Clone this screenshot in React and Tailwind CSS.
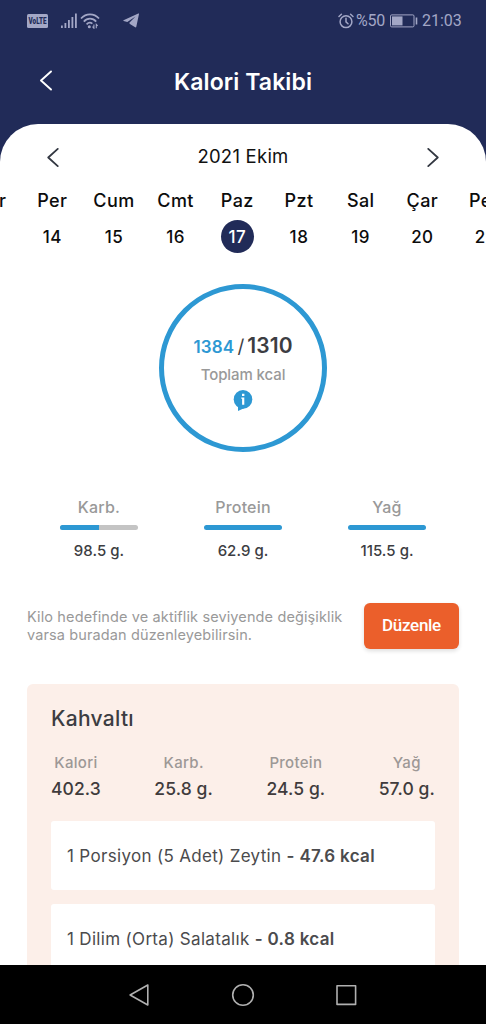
const days = [
  ['Çar', '13'], ['Per', '14'], ['Cum', '15'], ['Cmt', '16'], ['Paz', '17'],
  ['Pzt', '18'], ['Sal', '19'], ['Çar', '20'], ['Per', '21'],
];

const macros = [
  { name: 'Karb.', value: '98.5 g.', percent: 50 },
  { name: 'Protein', value: '62.9 g.', percent: 100 },
  { name: 'Yağ', value: '115.5 g.', percent: 100 },
];

const mealTotals = [
  ['Kalori', '402.3'], ['Karb.', '25.8 g.'], ['Protein', '24.5 g.'], ['Yağ', '57.0 g.'],
];

const foods = [
  ['1 Porsiyon (5 Adet) Zeytin', '47.6 kcal'],
  ['1 Dilim (Orta) Salatalık', '0.8 kcal'],
];

function Chevron({ right, className }) {
  return (
    <svg viewBox="0 0 12 20" className={className} fill="none" stroke="currentColor" strokeWidth="1.9" strokeLinecap="round" strokeLinejoin="round">
      <path d={right ? 'M1 1l10 9-10 9' : 'M11 1L1 10l10 9'} />
    </svg>
  );
}

function StatusBar() {
  return (
    <div className="flex h-[41px] shrink-0 items-center pl-[27px] pr-[24px] font-[Roboto,sans-serif] text-[#a3a7c6]">
      <svg className="h-[14px] w-[21px]" viewBox="0 0 21 14">
        <rect width="21" height="14" rx="1.5" fill="currentColor" />
        <text x="1.5" y="10.2" textLength="18" lengthAdjust="spacingAndGlyphs" fill="#212b58" className="text-[8.8px] font-black">VoLTE</text>
      </svg>
      <svg className="ml-[12px] h-[16px] w-[18px]" viewBox="0 0 18 16" fill="currentColor">
        <rect x="1" y="12.5" width="1.8" height="2.5" />
        <rect x="4.5" y="10" width="1.8" height="5" />
        <rect x="8" y="7" width="1.8" height="8" />
        <rect x="11.5" y="4" width="1.8" height="11" />
        <rect x="15" y="0.5" width="1.8" height="14.5" />
      </svg>
      <svg className="ml-[2px] h-[16px] w-[20px]" viewBox="0 0 20 16" fill="none" stroke="currentColor" strokeWidth="1.7">
        <path d="M1 5.5C6 0 14 0 19 5.5" />
        <path d="M3.8 8.6C7.2 4.7 12.8 4.7 16.2 8.6" />
        <path d="M6.6 11.3C8.6 9.2 10.4 9.2 12.4 10.6" />
        <circle cx="9.3" cy="13.8" r="1.5" fill="currentColor" stroke="none" />
        <path d="M13.9 11.4v3.8l-1.4-1.5M16.3 15.2v-3.8l1.4 1.5" strokeWidth="1.1" />
      </svg>
      <svg className="ml-[23px] h-[15px] w-[16px]" viewBox="0 0 16 15" fill="currentColor">
        <path d="M15.3 0.5L0.5 7.2c-.4.2-.3.7.1.8l3.7 1.1 8.2-5.6-6.4 6.5 1.2 1.3 4.9 3c.5.3 1 .1 1.1-.5L16 1c.1-.5-.3-.7-.7-.5z" />
      </svg>
      <svg className="ml-auto h-[16px] w-[16px]" viewBox="0 0 16 16" fill="none" stroke="currentColor" strokeWidth="1.5" strokeLinecap="round">
        <circle cx="8" cy="8.7" r="5.9" />
        <path d="M8 5.3v3.6l2 1.9M1 3.5l2.4-2.2M15 3.5l-2.4-2.2" />
      </svg>
      <span className="ml-[2px] mt-px w-[30px] whitespace-nowrap text-[16px] leading-none tracking-[-0.2px]">%50</span>
      <svg className="ml-[4px] h-[14px] w-[28px]" viewBox="0 0 28 14" fill="none" stroke="currentColor">
        <rect x="0.5" y="0.9" width="23.5" height="12" rx="1.2" />
        <rect x="2" y="2.4" width="10.5" height="9" fill="currentColor" stroke="none" />
        <path d="M26.5 3.5v7" strokeWidth="1.6" />
      </svg>
      <span className="ml-[4px] mt-px w-[40px] whitespace-nowrap text-[16px] leading-none">21:03</span>
    </div>
  );
}

function Calendar() {
  return (
    <section className="shrink-0 overflow-hidden">
      <div className="flex h-[60px] items-center justify-between px-[47px] pt-[6px]">
        <Chevron className="h-[19px] w-[12px] text-[#333842]" />
        <h2 className="text-[18.5px] tracking-[0.25px] text-[#111]">2021 Ekim</h2>
        <Chevron right className="h-[19px] w-[12px] text-[#333842]" />
      </div>
      <div className="-ml-[40.3px] flex w-[555.3px]">
        {days.map(([name, date], i) => (
          <div key={i} className="flex w-[61.7px] shrink-0 flex-col items-center">
            <span className="flex h-[32px] items-center text-[18px] font-[470] tracking-[0.4px] text-[#0c0c0c]">{name}</span>
            <span className={date === '17'
              ? 'mt-[4px] flex h-[33px] w-[33px] items-center justify-center rounded-full bg-[#212b58] pt-[2px] text-[17px] font-[470] tracking-[0.5px] text-white'
              : 'mt-[4px] flex h-[33px] w-[33px] items-center justify-center pt-[2px] text-[17px] font-[470] tracking-[0.5px] text-[#0c0c0c]'}>{date}</span>
          </div>
        ))}
      </div>
    </section>
  );
}

export default function App() {
  return (
    <div className="flex h-[1024px] w-[486px] flex-col overflow-hidden bg-[#212b58] font-[Inter,sans-serif]">
      <StatusBar />
      <header className="flex h-[83px] shrink-0 items-start pl-[40px] pt-[29px]">
        <Chevron className="h-[21px] w-[12px] text-white" />
        <h1 className="ml-[122px] mt-[-4px] whitespace-nowrap text-[23px] font-semibold leading-[32px] tracking-[0.1px] text-white">Kalori Takibi</h1>
      </header>
      <main className="flex h-[841px] shrink-0 flex-col overflow-hidden rounded-t-[38px] bg-white">
        <Calendar />
        <section className="mx-auto mt-[31px] flex h-[168px] w-[168px] shrink-0 flex-col items-center rounded-full border-[5.5px] border-[#2d98d3]">
          <div className="mt-[42px] flex h-[29px] items-baseline whitespace-nowrap leading-[30px] text-[#3c3d42]">
            <span className="text-[17px] font-semibold tracking-[0.2px] text-[#2d98d3]">1384</span>
            <span className="mx-[3px] text-[19px]">/</span>
            <span className="text-[21px] font-semibold tracking-[0.1px]">1310</span>
          </div>
          <span className="whitespace-nowrap text-[15px] font-[450] leading-[30px] tracking-[-0.1px] text-[#999]">Toplam kcal</span>
          <svg className="h-[22px] w-[20px]" viewBox="0 0 20 22">
            <circle cx="10" cy="9.4" r="9.3" fill="#2d98d3" />
            <path d="M5 15v6l6.5-3z" fill="#2d98d3" />
            <path d="M8.3 7.5h3v7.3H9.1V8.8h-.8zM9 3.8h2.4v2.2H9z" fill="white" />
          </svg>
        </section>
        <section className="mt-[43px] flex shrink-0 justify-between px-[60px]">
          {macros.map((m) => (
            <div key={m.name} className="flex w-[78px] flex-col items-center whitespace-nowrap">
              <span className="text-[16px] font-[450] leading-[24px] tracking-[0.2px] text-[#999]">{m.name}</span>
              <div className="mt-[6px] h-[5px] w-full overflow-hidden rounded-full bg-[#c4c4c4]">
                <div className="h-full bg-[#2d98d3]" style={{ width: m.percent + '%' }} />
              </div>
              <span className="mt-[10px] text-[15px] font-[480] leading-[22px] tracking-[0.05px] text-[#3c3d42]">{m.value}</span>
            </div>
          ))}
        </section>
        <section className="mt-[41px] flex h-[46px] shrink-0 items-center justify-between px-[27px]">
          <p className="whitespace-nowrap text-[14.5px] leading-[18px] tracking-[0.12px] text-[#999]">
            Kilo hedefinde ve aktiflik seviyende değişiklik<br />varsa buradan düzenleyebilirsin.
          </p>
          <button className="h-[46px] w-[95px] rounded-[6px] bg-[#eb5f2b] pb-px font-[Roboto,sans-serif] text-[17px] font-medium tracking-[-0.3px] text-white shadow-[0_2px_4px_#0002]">Düzenle</button>
        </section>
        <section className="mx-[27px] mt-[35px] h-[330px] shrink-0 rounded-t-[6px] bg-[#fcefe9] px-[24px]">
          <h2 className="pt-[19px] text-[21px] font-[480] leading-[32px] tracking-[0.3px] text-[#3c3d42]">Kahvaltı</h2>
          <div className="mt-[15px] flex justify-between whitespace-nowrap">
            {mealTotals.map(([name, value]) => (
              <div key={name} className="flex flex-col items-center">
                <span className="text-[15px] font-[450] leading-[26px] tracking-[0.3px] text-[#9d9896]">{name}</span>
                <span className="text-[17.5px] font-medium leading-[25px] tracking-[0.1px] text-[#403b3c]">{value}</span>
              </div>
            ))}
          </div>
          <div className="mt-[20px] flex flex-col gap-[14px]">
            {foods.map(([name, kcal]) => (
              <div key={name} className="flex h-[69px] items-center rounded-[3px] bg-white px-[16px] pt-[2px]">
                <p className="whitespace-pre text-[17px] tracking-[0.32px] text-[#4b4b4d]">{name} <span className="font-semibold">- {kcal}</span></p>
              </div>
            ))}
          </div>
        </section>
      </main>
      <nav className="flex h-[59px] shrink-0 items-center justify-center bg-black">
        <svg className="h-[24px] w-[228px]" viewBox="0 0 228 24" fill="none" stroke="#b0b0b0" strokeWidth="1.6" strokeLinejoin="round">
          <path d="M18.8 2v20L1.1 12z" />
          <circle cx="114" cy="12" r="10.3" />
          <rect x="208" y="2.8" width="18.6" height="18.6" />
        </svg>
      </nav>
    </div>
  );
}
